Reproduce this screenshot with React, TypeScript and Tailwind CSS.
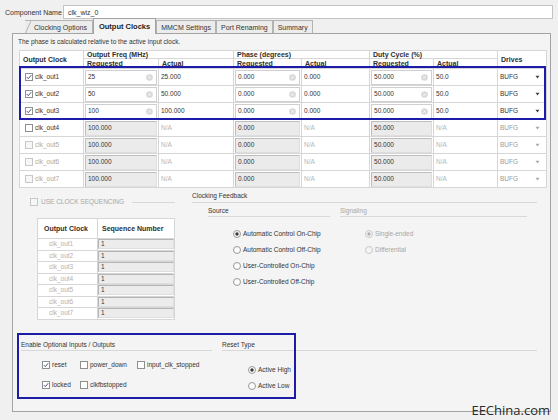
import React from "react";

const F = { fontFamily: '"Liberation Sans", Arial, sans-serif' };

function Check({ checked = false, disabled = false }: { checked?: boolean; disabled?: boolean }) {
  return (
    <svg width="8" height="8" viewBox="0 0 8 8" className="shrink-0">
      <rect x="0.5" y="0.5" width="7" height="7" fill={disabled ? "#f7f7f7" : "#ffffff"} stroke={disabled ? "#c8c8c8" : "#8e8f8f"} />
      {checked && <path d="M1.8 4.1 L3.3 5.7 L6.2 2.2" fill="none" stroke="#4a5a7c" strokeWidth="1" />}
    </svg>
  );
}

function Radio({ on = false, disabled = false }: { on?: boolean; disabled?: boolean }) {
  return (
    <svg width="8" height="8" viewBox="0 0 8 8" className="shrink-0">
      <circle cx="4" cy="4" r="3.5" fill={disabled ? "#f4f4f4" : "#fbfbfb"} stroke={disabled ? "#c8c8c8" : "#9a9a9a"} />
      {on && <circle cx="4" cy="4" r="1.7" fill={disabled ? "#b0b0b0" : "#3a3a3a"} />}
    </svg>
  );
}

function Clear() {
  return (
    <svg width="7" height="7" viewBox="0 0 8 8" className="shrink-0">
      <circle cx="4" cy="4" r="3.8" fill="#d8d8d8" />
      <path d="M2.6 2.6 L5.4 5.4 M5.4 2.6 L2.6 5.4" stroke="#ffffff" strokeWidth="0.9" />
    </svg>
  );
}

function Arrow({ dim = false }: { dim?: boolean }) {
  return (
    <svg width="5" height="4" viewBox="0 0 5 4">
      <path d="M0.5 0.8 L4.5 0.8 L2.5 3.4 Z" fill={dim ? "#a8a8a8" : "#404040"} />
    </svg>
  );
}

function EditCell({ v }: { v: string }) {
  return (
    <div className="h-[15px] mx-px border border-[#cfcfcf] bg-white flex items-center justify-between pl-[2px] pr-[3px]">
      <span>{v}</span>
      <Clear />
    </div>
  );
}

function GrayCell({ v }: { v: string }) {
  return (
    <div className="h-[15px] mx-px border border-[#bdbdbd] border-r-[#dedede] border-b-[#dedede] bg-[#ebebeb] flex items-center pl-[2px]">
      <span>{v}</span>
    </div>
  );
}

const rows = [
  { n: 1, f: "25", fa: "25.000", on: true },
  { n: 2, f: "50", fa: "50.000", on: true },
  { n: 3, f: "100", fa: "100.000", on: true },
  { n: 4, f: "100.000", fa: "N/A", on: false },
  { n: 5, f: "100.000", fa: "N/A", on: false },
  { n: 6, f: "100.000", fa: "N/A", on: false },
  { n: 7, f: "100.000", fa: "N/A", on: false },
];

const td = "border border-[#d6d6d6] p-0 align-middle";
const th = "border border-[#d6d6d6] px-[3px] py-0 text-left font-bold text-[7px] text-[#2e2e2e] leading-none";

function OutputTable() {
  return (
    <div className="relative w-[527px]">
      <table className="table-fixed border-collapse w-[527px] bg-white text-[6.5px] text-[#333]">
        <colgroup>
          <col className="w-[64px]" />
          <col className="w-[75px]" />
          <col className="w-[75px]" />
          <col className="w-[68px]" />
          <col className="w-[68px]" />
          <col className="w-[64px]" />
          <col className="w-[64px]" />
          <col className="w-[49px]" />
        </colgroup>
        <thead>
          <tr className="h-[8px]">
            <th rowSpan={2} className={th}>Output Clock</th>
            <th colSpan={2} className={th}>Output Freq (MHz)</th>
            <th colSpan={2} className={th}>Phase (degrees)</th>
            <th colSpan={2} className={th}>Duty Cycle (%)</th>
            <th rowSpan={2} className={th}>Drives</th>
          </tr>
          <tr className="h-[10px]">
            <th className={th}>Requested</th>
            <th className={th}>Actual</th>
            <th className={th}>Requested</th>
            <th className={th}>Actual</th>
            <th className={th}>Requested</th>
            <th className={th}>Actual</th>
          </tr>
        </thead>
        <tbody>
          {rows.map((r) => {
            const dimLabel = r.n > 4;
            return (
              <tr key={r.n} className="h-[17px]">
                <td className={td}>
                  <div className={`flex items-center gap-[2px] pl-[5px] ${dimLabel ? "text-[#a9a9a9]" : ""}`}>
                    <Check checked={r.on} disabled={dimLabel} />
                    <span>clk_out{r.n}</span>
                  </div>
                </td>
                <td className={td}>{r.on ? <EditCell v={r.f} /> : <GrayCell v={r.f} />}</td>
                <td className={`${td} pl-[2px] ${r.on ? "" : "text-[#b5b5b5]"}`}>{r.fa}</td>
                <td className={td}>{r.on ? <EditCell v="0.000" /> : <GrayCell v="0.000" />}</td>
                <td className={`${td} pl-[2px] ${r.on ? "" : "text-[#b5b5b5]"}`}>{r.on ? "0.000" : "N/A"}</td>
                <td className={td}>{r.on ? <EditCell v="50.000" /> : <GrayCell v="50.000" />}</td>
                <td className={`${td} pl-[2px] ${r.on ? "" : "text-[#b5b5b5]"}`}>{r.on ? "50.0" : "N/A"}</td>
                <td className={td}>
                  <div className={`flex items-center justify-between pl-[2px] pr-[6px] ${r.on ? "" : "text-[#9a9a9a]"}`}>
                    <span>BUFG</span>
                    <Arrow dim={!r.on} />
                  </div>
                </td>
              </tr>
            );
          })}
        </tbody>
      </table>
      <div className="absolute left-0 top-[16px] w-[527px] h-[54px] border-2 border-[#1c1ca8] pointer-events-none" />
    </div>
  );
}

function SeqTable() {
  return (
    <table className="table-fixed border-collapse w-[137px] bg-white text-[6.5px]">
      <colgroup>
        <col className="w-[60px]" />
        <col className="w-[77px]" />
      </colgroup>
      <thead>
        <tr className="h-[20px]">
          <th className={`${th} pl-[6px]`}>Output Clock</th>
          <th className={`${th} pl-[4px]`}>Sequence Number</th>
        </tr>
      </thead>
      <tbody>
        {[1, 2, 3, 4, 5, 6, 7].map((n) => (
          <tr key={n} className="h-[11.5px]">
            <td className="border border-[#d6d6d6] p-0 pl-[11px] text-[#b2b2b2] leading-none">clk_out{n}</td>
            <td className="border border-[#d6d6d6] p-0">
              <div className="h-[10px] border border-[#b5b5b5] border-r-[#dedede] border-b-[#dedede] bg-[#ececec] pl-[2px] flex items-center leading-none text-[#333]">1</div>
            </td>
          </tr>
        ))}
      </tbody>
    </table>
  );
}

function Tab({ label, active = false, first = false }: { label: string; active?: boolean; first?: boolean }) {
  if (active) {
    return (
      <div className="relative z-10 -mb-px h-[16px] px-[5px] flex items-center border border-b-0 border-[#a3a3a3] bg-[#f4f4f4] font-bold text-[#222] text-[7.5px]">
        {label}
      </div>
    );
  }
  return (
    <div className={`h-[13px] flex items-center border border-[#b3b3b3] border-b-0 bg-[#ececec] text-[#333] ${first ? "pl-[9px] pr-[5px] border-l-0 relative" : "px-[4px]"}`}>
      {first && (
        <svg className="absolute left-0 top-0" width="6" height="13" viewBox="0 0 6 13">
          <path d="M0 13 L6 0" stroke="#b3b3b3" strokeWidth="1" />
        </svg>
      )}
      {label}
    </div>
  );
}

export default function App() {
  return (
    <div style={F} className="relative w-[558px] h-[420px] overflow-hidden bg-[#f0f0f0] text-[6.5px] leading-none text-[#333]">
      {/* component name */}
      <div className="h-[20px] flex items-center pl-[5px] pt-[4px]">
        <span className="w-[58px] text-[7px] whitespace-nowrap">Component Name</span>
        <div className="w-[490px] h-[14px] border border-[#c3c3c3] bg-white flex items-center pl-[4px] text-[7px]">clk_wiz_0</div>
      </div>

      {/* tabs */}
      <div className="flex items-end h-[13px] pl-[25px] text-[7px]">
        <Tab label="Clocking Options" first />
        <Tab label="Output Clocks" active />
        <Tab label="MMCM Settings" />
        <Tab label="Port Renaming" />
        <Tab label="Summary" />
      </div>

      {/* panel */}
      <div className="relative ml-[12px] w-[539px] h-[379px] border border-[#a3a3a3] bg-[#f4f4f4] pl-[6px]">
        <div className="h-[16px] flex items-center -ml-px">The phase is calculated relative to the active input clock.</div>
        <OutputTable />

        {/* lower */}
        <div className="flex h-[145px]">
          <div className="w-[166px] flex flex-col">
            <div className="mt-[8px] h-[12px] flex items-center pl-[11px] w-[156px] gap-[3px] text-[#a7a7a7]">
              <Check disabled />
              <span>USE CLOCK SEQUENCING</span>
              <div className="flex-1 ml-[5px] h-px bg-[#d8d8d8]" />
            </div>
            <div className="mt-[10px] ml-[18px]">
              <SeqTable />
            </div>
          </div>

          <div className="ml-[7px] w-[345px] flex flex-col">
            <div className="mt-[3px] h-[12px] flex items-center border-b border-[#d8d8d8]">Clocking Feedback</div>
            <div className="flex pl-[16px] mt-[4px]">
              <div className="w-[122px] flex flex-col">
                <div className="h-[10px] border-b border-[#d8d8d8] flex items-center">Source</div>
                <div className="mt-[9px] pl-[25px] flex flex-col">
                  {[
                    "Automatic Control On-Chip",
                    "Automatic Control Off-Chip",
                    "User-Controlled On-Chip",
                    "User-Controlled Off-Chip",
                  ].map((t, i) => (
                    <div key={t} className="h-[16px] flex items-center gap-[2px] whitespace-nowrap">
                      <Radio on={i === 0} />
                      <span>{t}</span>
                    </div>
                  ))}
                </div>
              </div>
              <div className="ml-[10px] w-[187px] flex flex-col text-[#a7a7a7]">
                <div className="h-[10px] border-b border-[#d8d8d8] flex items-center">Signaling</div>
                <div className="mt-[9px] pl-[25px] flex flex-col">
                  {["Single-ended", "Differential"].map((t, i) => (
                    <div key={t} className="h-[16px] flex items-center gap-[2px]">
                      <Radio on={i === 0} disabled />
                      <span>{t}</span>
                    </div>
                  ))}
                </div>
              </div>
            </div>
          </div>
        </div>

        {/* optional inputs / outputs */}
        <div className="relative flex h-[66px]">
          <div className="ml-[2px] w-[191px] flex flex-col">
            <div className="mt-[8px] h-[10px] border-b border-[#d8d8d8] flex items-center">Enable Optional Inputs / Outputs</div>
            <div className="mt-[4px] pl-[21px] grid grid-cols-[38px_57px_80px] grid-rows-[20px_20px] items-center">
              <div className="flex items-center gap-[2px]"><Check checked /><span>reset</span></div>
              <div className="flex items-center gap-[2px]"><Check /><span>power_down</span></div>
              <div className="flex items-center gap-[2px]"><Check /><span>input_clk_stopped</span></div>
              <div className="flex items-center gap-[2px]"><Check checked /><span>locked</span></div>
              <div className="flex items-center gap-[2px]"><Check /><span>clkfbstopped</span></div>
            </div>
          </div>
          <div className="ml-[10px] w-[315px] flex flex-col">
            <div className="mt-[8px] h-[10px] border-b border-[#d8d8d8] flex items-center">Reset Type</div>
            <div className="mt-[11px] pl-[26px] flex flex-col">
              {["Active High", "Active Low"].map((t, i) => (
                <div key={t} className="h-[16px] flex items-center gap-[2px]">
                  <Radio on={i === 0} />
                  <span>{t}</span>
                </div>
              ))}
            </div>
          </div>
          <div className="absolute -left-[2px] top-0 w-[279px] h-[66px] border-2 border-[#1c1ca8] pointer-events-none" />
        </div>
      </div>

      <div className="absolute right-[8px] bottom-[3px] text-[13px] text-[#2a2a2a]" style={{ fontFamily: '"Open Sans", "Liberation Sans", sans-serif' }}>
        EEChina.com
      </div>
    </div>
  );
}
